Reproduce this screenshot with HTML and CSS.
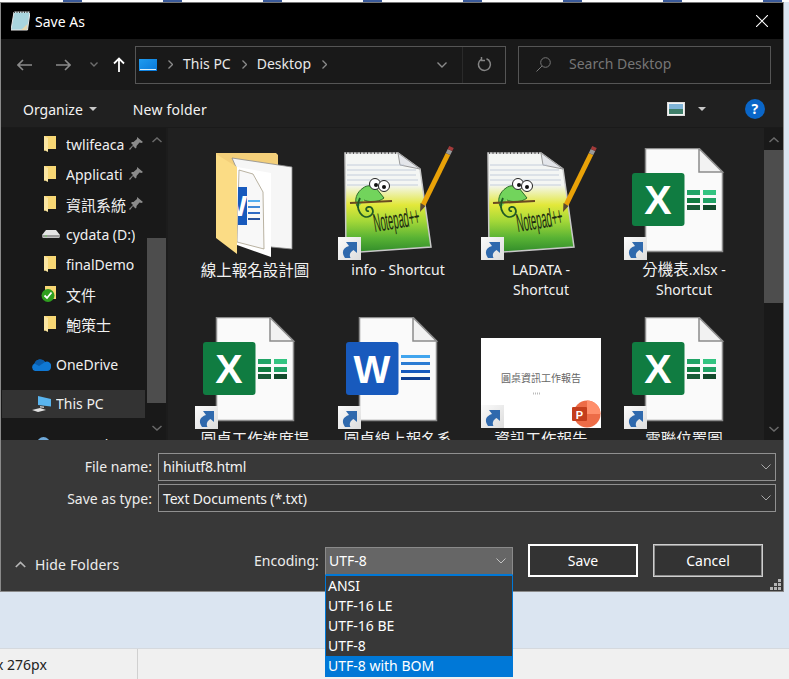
FILE: index.html
```html
<!DOCTYPE html>
<html lang="en">
<head>
  <meta charset="UTF-8" />
  <title>Save As</title>
  <link rel="stylesheet" href="styles.css">
</head>
<body>
  <!-- shared icons -->
  <svg class="defs" width="0" height="0">
    <defs>
      <linearGradient id="pad" x1="0" y1="0" x2="0" y2="1">
        <stop offset="0.32" stop-color="#f4f6f4"/>
        <stop offset="0.52" stop-color="#e2e83a"/>
        <stop offset="0.68" stop-color="#a4d838"/>
        <stop offset="0.85" stop-color="#58b234"/>
        <stop offset="1" stop-color="#2f8a2a"/>
      </linearGradient>
      <linearGradient id="link" x1="0" y1="0" x2="1" y2="1">
        <stop offset="0" stop-color="#fbfbfb"/>
        <stop offset="1" stop-color="#dcdcdc"/>
      </linearGradient>
      <linearGradient id="screen" x1="0" y1="0" x2="1" y2="1">
        <stop offset="0" stop-color="#1e9bf0"/>
        <stop offset="1" stop-color="#0a78d8"/>
      </linearGradient>
      <clipPath id="flap-page"><rect x="43" y="39" width="9" height="38"/></clipPath>
      <symbol id="shortcut" viewBox="0 0 23 23">
        <rect width="23" height="23" fill="url(#link)"/>
        <path d="M7 21C3 15 5 11 11 9L8 5H19V16L15.500 13C12 15 11 18 12.500 21Z" fill="#2f69ad"/>
      </symbol>
      <symbol id="doc" viewBox="0 0 120 112">
        <path d="M21.500 .5H75L98.500 24V103.500H21.500Z" fill="#fafafa" stroke="#8c8c8c" stroke-width="1.500"/>
        <path d="M75 .5V24H98.500Z" fill="#f2f2f2" stroke="#8c8c8c" stroke-width="1.500"/>
      </symbol>
      <symbol id="excel" viewBox="0 0 120 112">
        <use href="#doc" width="120" height="112"/>
        <rect x="63" y="42" width="13" height="5" fill="#21a366"/>
        <rect x="79" y="42" width="13" height="5" fill="#33c481"/>
        <rect x="63" y="50" width="13" height="5" fill="#107c41"/>
        <rect x="79" y="50" width="13" height="5" fill="#21a366"/>
        <rect x="63" y="57" width="13" height="5" fill="#185c37"/>
        <rect x="79" y="57" width="13" height="5" fill="#134a2c"/>
        <rect x="8" y="25" width="52.500" height="53" rx="3" fill="#107c41"/>
        <text x="34" y="66" class="doc-letter" font-size="41">X</text>
        <use href="#shortcut" y="89" width="23" height="23"/>
      </symbol>
      <symbol id="word" viewBox="0 0 120 112">
        <use href="#doc" width="120" height="112"/>
        <rect x="63" y="38" width="29" height="3" fill="#41a5ee"/>
        <rect x="63" y="45" width="29" height="3" fill="#2b7cd3"/>
        <rect x="63" y="53" width="29" height="3" fill="#185abd"/>
        <rect x="63" y="60" width="29" height="3" fill="#103f91"/>
        <rect x="8" y="25" width="52.500" height="53" rx="3" fill="#185abd"/>
        <text x="34" y="66" class="doc-letter" font-size="39">W</text>
        <use href="#shortcut" y="89" width="23" height="23"/>
      </symbol>
      <symbol id="notepad" viewBox="0 -6 120 118" overflow="visible">
        <path d="M7 5H60L82 21L93 99L8 105Z" fill="url(#pad)" stroke="#c8c8c8" stroke-width="1.500"/>
        <path d="M8 5H60" stroke="#333" stroke-width="1.500" stroke-dasharray="1 2.500"/>
        <path d="M60 5L62 17L82 21Z" fill="#e4e6ea" stroke="#9a9a9a"/>
        <path d="M9 17H66M9 22H78M9 27H78M9 32H80M9 37H80" stroke="#b9c4d6" stroke-width=".8"/>
        <path d="M20 60C15 52 19 44 25 40C29 37 34 37 38 40L46 50C40 55 30 54 26 52" fill="#72d45c" stroke="#2d6b2a"/>
        <circle cx="37" cy="36" r="5.500" fill="#fff" stroke="#222"/>
        <circle cx="46" cy="38" r="5.500" fill="#fff" stroke="#222"/>
        <circle cx="38" cy="37" r="2" fill="#111"/>
        <circle cx="46" cy="39" r="2" fill="#111"/>
        <path d="M12 55L54 53" stroke="#6b4a20" stroke-width="2.200"/>
        <path d="M22 50C16 62 25 72 32 68C37 65 35 58 30 59C27 60 28 64 31 63" fill="none" stroke="#1f5a25" stroke-width="1.800"/>
        <text transform="translate(37 84) rotate(-9) scale(.72 2)" class="pad-name" font-size="13">Notepad++</text>
        <path d="M85 57L110 6" stroke="#e9a208" stroke-width="5"/>
        <path d="M110 6L112 2" stroke="#9a9a9a" stroke-width="5"/>
        <path d="M112 2L113.500 -1" stroke="#a33a3a" stroke-width="5"/>
        <path d="M82.500 55L87.500 58L82 64Z" fill="#5a4a30"/>
        <use href="#shortcut" y="89" width="23" height="23"/>
      </symbol>
      <symbol id="folder-sm" viewBox="0 0 12 16">
        <path d="M0 0H12V13H3L0 15Z" fill="#f7d774"/>
        <path d="M0 0L4 2V16L0 14Z" fill="#fbe6a2"/>
      </symbol>
      <symbol id="pin" viewBox="0 0 14 13">
        <path d="M8 0L14 5L12.500 6L10.500 5.500L7.500 9L7.500 10.500L6.500 11.500L4 9L1 13L0 12L4 8L2 6L3 5L4.500 5L8 2Z" fill="#8b8b8b"/>
      </symbol>
    </defs>
  </svg>

  <div class="ruler"></div>

  <div class="window">
    <div class="titlebar">
      <svg class="title-icon" viewBox="0 0 19 20">
        <path d="M3 1H19L16.500 19H0Z" fill="#a9d5de" stroke="#e8e8e8"/>
        <path d="M3 1H19" stroke="#444" stroke-width="2" stroke-dasharray="1 1.500"/>
        <path d="M16.500 13L15.500 19H10Z" fill="#e6d8b0"/>
      </svg>
      <span class="title-text">Save As</span>
      <svg class="close-icon" viewBox="0 0 12 12"><path d="M0 0L12 12M12 0L0 12" stroke="#fff" stroke-width="1.100"/></svg>
    </div>

    <div class="navbar">
      <svg class="nav-btn back" viewBox="0 0 15 12"><path d="M15 6H1M6 1L1 6L6 11" fill="none" stroke="#8a8a8a" stroke-width="1.600"/></svg>
      <svg class="nav-btn forward" viewBox="0 0 15 12"><path d="M0 6H14M9 1L14 6L9 11" fill="none" stroke="#8a8a8a" stroke-width="1.600"/></svg>
      <svg class="nav-btn recent" viewBox="0 0 8 5"><path d="M.5 .5L4 4L7.500 .5" fill="none" stroke="#6e6e6e" stroke-width="1.400"/></svg>
      <svg class="nav-btn up" viewBox="0 0 12 15"><path d="M6 15V1.500M1 6.500L6 1.500L11 6.500" fill="none" stroke="#fff" stroke-width="1.800"/></svg>

      <div class="address">
        <svg class="pc-icon" viewBox="0 0 18 12">
          <rect width="18" height="12" fill="url(#screen)"/>
          <path d="M1 10.500H17" stroke="#d8eefc"/>
        </svg>
        <svg class="crumb" viewBox="0 0 5 9"><path d="M.5 .5L4.500 4.500L.5 8.500" fill="none" stroke="#8a8a8a" stroke-width="1.300"/></svg>
        <span class="crumb-text">This PC</span>
        <svg class="crumb" viewBox="0 0 5 9"><path d="M.5 .5L4.500 4.500L.5 8.500" fill="none" stroke="#8a8a8a" stroke-width="1.300"/></svg>
        <span class="crumb-text">Desktop</span>
        <svg class="crumb" viewBox="0 0 5 9"><path d="M.5 .5L4.500 4.500L.5 8.500" fill="none" stroke="#8a8a8a" stroke-width="1.300"/></svg>
        <svg class="addr-down" viewBox="0 0 10 6"><path d="M.5 .5L5 5L9.500 .5" fill="none" stroke="#8a8a8a" stroke-width="1.400"/></svg>
        <div class="refresh">
          <svg viewBox="0 0 15 15"><path d="M9.500 1.800A6 6 0 1 1 4 2.500M4.500 0V3.500H8" fill="none" stroke="#858585" stroke-width="1.500"/></svg>
        </div>
      </div>

      <div class="search">
        <svg class="search-icon" viewBox="0 0 15 15"><circle cx="9.500" cy="5.500" r="4.800" fill="none" stroke="#777"/><path d="M6 9L.5 14.500" stroke="#777"/></svg>
        <span class="search-text">Search Desktop</span>
      </div>
    </div>

    <div class="toolbar">
      <span class="tool">Organize</span>
      <span class="caret"></span>
      <span class="tool new-folder">New folder</span>
      <svg class="view-icon" viewBox="0 0 18 14">
        <rect x=".5" y=".5" width="17" height="13" fill="#f4f4f4" stroke="#ddd"/>
        <rect x="2" y="2" width="14" height="5" fill="#7fb4d8"/>
        <rect x="2" y="7" width="14" height="5" fill="#3f7f6a"/>
      </svg>
      <span class="caret view-caret"></span>
      <span class="help">?</span>
    </div>

    <div class="browser">
      <div class="sidebar">
        <ul class="tree">
          <li class="tree-row"><svg class="tree-icon"><use href="#folder-sm"/></svg><span class="tree-name">twlifeaca</span><svg class="pin"><use href="#pin"/></svg></li>
          <li class="tree-row"><svg class="tree-icon"><use href="#folder-sm"/></svg><span class="tree-name">Applicati</span><svg class="pin"><use href="#pin"/></svg></li>
          <li class="tree-row"><svg class="tree-icon"><use href="#folder-sm"/></svg><span class="tree-name cjk-tree">資訊系統</span><svg class="pin"><use href="#pin"/></svg></li>
          <li class="tree-row">
            <svg class="tree-icon drive" viewBox="0 0 18 10">
              <path d="M0 6L4 1H14L18 6L17 9H1Z" fill="#e4e4e4"/>
              <path d="M0 6H18V8.500H0Z" fill="#9b9b9b"/>
              <rect x="3" y="6.500" width="2" height="1" fill="#6fd05a"/>
            </svg>
            <span class="tree-name">cydata (D:)</span>
          </li>
          <li class="tree-row"><svg class="tree-icon"><use href="#folder-sm"/></svg><span class="tree-name">finalDemo</span></li>
          <li class="tree-row">
            <svg class="tree-icon synced" viewBox="0 0 16 16">
              <path d="M4 0H15V13H4Z" fill="#f7d774"/>
              <circle cx="7" cy="9.500" r="6.500" fill="#2f9e1f"/>
              <path d="M3.500 9.500L6 12L10.500 6.500" fill="none" stroke="#fff" stroke-width="1.800"/>
            </svg>
            <span class="tree-name cjk-tree">文件</span>
          </li>
          <li class="tree-row"><svg class="tree-icon"><use href="#folder-sm"/></svg><span class="tree-name cjk-tree">鮑策士</span></li>
          <li class="tree-row root onedrive">
            <svg class="root-icon" viewBox="0 0 20 13">
              <path d="M4 13A4 4 0 0 1 3.500 5.500A6 6 0 0 1 14 4A4.500 4.500 0 0 1 20 9.500A4 4 0 0 1 16 13Z" fill="#0f78d4"/>
              <path d="M3.500 5.500A6 6 0 0 1 14 4L8 8Z" fill="#0a5cab"/>
            </svg>
            <span class="tree-name">OneDrive</span>
          </li>
          <li class="tree-row root selected">
            <svg class="root-icon" viewBox="0 0 19 16">
              <path d="M6 0L19 3V10.500L6 9Z" fill="#59b4ee"/>
              <path d="M8 10L12 10.500V12L8 11.500Z" fill="#bdbdbd"/>
              <path d="M0 14L8 12L14 14L6 16Z" fill="#e0e0e0"/>
            </svg>
            <span class="tree-name">This PC</span>
          </li>
          <li class="tree-row root network">
            <svg class="root-icon globe" viewBox="0 0 13 13"><circle cx="6.500" cy="6.500" r="6.500" fill="#6ea8d8"/></svg>
            <span class="tree-name">Network</span>
          </li>
        </ul>
        <div class="scrollbar side-scroll">
          <svg class="arrow" viewBox="0 0 10 6"><path d="M.5 5L5 1L9.500 5" fill="none" stroke="#6a6a6a" stroke-width="1.500"/></svg>
          <div class="thumb"></div>
          <svg class="arrow" viewBox="0 0 10 6"><path d="M.5 1L5 5L9.500 1" fill="none" stroke="#6a6a6a" stroke-width="1.500"/></svg>
        </div>
      </div>

      <div class="files">
        <div class="file-grid">
          <div class="file">
            <svg class="file-icon" viewBox="0 0 120 112">
              <path d="M21 5H81L83 7V60H21Z" fill="#f3cf7a"/>
              <path d="M37 10L97 19V101L76 99Z" fill="#f6f6f6" stroke="#8a8a8a" stroke-width=".8"/>
              <path d="M42 19L76 25V109L42 97Z" fill="#fff"/>
              <path d="M44 22L58 26L68 44L69 101L42 94Z" fill="#f8f8f8" stroke="#a8a08a" stroke-width=".8"/>
              <rect x="43" y="39" width="9" height="38" fill="#185abd"/>
              <text x="38" y="68" class="doc-letter" font-size="30" clip-path="url(#flap-page)">W</text>
              <path d="M53 53H65" stroke="#41a5ee" stroke-width="1.800"/>
              <path d="M53 59H65" stroke="#2b7cd3" stroke-width="1.800"/>
              <path d="M53 65H65" stroke="#185abd" stroke-width="1.800"/>
              <path d="M53 71H65" stroke="#103f91" stroke-width="1.800"/>
              <path d="M21 6L42 19V106L21 90Z" fill="#fbdc85"/>
            </svg>
            <div class="file-name cjk">線上報名設計圖</div>
          </div>
          <div class="file">
            <svg class="file-icon"><use href="#notepad" y="-6" width="120" height="118"/></svg>
            <div class="file-name">info - Shortcut</div>
          </div>
          <div class="file">
            <svg class="file-icon"><use href="#notepad" y="-6" width="120" height="118"/></svg>
            <div class="file-name">LADATA - Shortcut</div>
          </div>
          <div class="file">
            <svg class="file-icon"><use href="#excel"/></svg>
            <div class="file-name"><span class="cjk-inline">分機表</span>.xlsx - Shortcut</div>
          </div>
          <div class="file">
            <svg class="file-icon"><use href="#excel"/></svg>
            <div class="file-name cjk">圓桌工作進度提</div>
          </div>
          <div class="file">
            <svg class="file-icon"><use href="#word"/></svg>
            <div class="file-name cjk">圓桌線上報名系</div>
          </div>
          <div class="file">
            <svg class="file-icon" viewBox="0 0 120 112">
              <rect y="21" width="120" height="90" fill="#fff"/>
              <text x="60" y="65" class="slide-title" font-size="10">圓桌資訊工作報告</text>
              <path d="M52 76.500H60" stroke="#bbb" stroke-width="2" stroke-dasharray="1 1"/>
              <circle cx="106" cy="97" r="13.500" fill="#ed6c47"/>
              <path d="M106 83.500A13.500 13.500 0 0 1 119.500 97H106Z" fill="#ff8f6b"/>
              <rect x="91" y="90" width="15" height="14" rx="1" fill="#c43e1c"/>
              <text x="98.500" y="101.500" class="ppt-letter" font-size="11">P</text>
              <use href="#shortcut" y="88" width="23" height="23"/>
            </svg>
            <div class="file-name cjk">資訊工作報告</div>
          </div>
          <div class="file">
            <svg class="file-icon"><use href="#excel"/></svg>
            <div class="file-name cjk">電聯位置圖</div>
          </div>
        </div>
        <div class="scrollbar main-scroll">
          <svg class="arrow" viewBox="0 0 10 6"><path d="M.5 5L5 1L9.500 5" fill="none" stroke="#6a6a6a" stroke-width="1.500"/></svg>
          <div class="thumb"></div>
          <svg class="arrow" viewBox="0 0 10 6"><path d="M.5 1L5 5L9.500 1" fill="none" stroke="#6a6a6a" stroke-width="1.500"/></svg>
        </div>
      </div>
    </div>

    <div class="save-panel">
      <div class="field">
        <label class="field-label name-label">File name:</label>
        <div class="combo name-box">
          <span>hihiutf8.html</span>
          <svg class="combo-arrow" viewBox="0 0 10 6"><path d="M.5 .5L5 5L9.500 .5" fill="none" stroke="#a8a8a8"/></svg>
        </div>
      </div>
      <div class="field">
        <label class="field-label">Save as type:</label>
        <div class="combo type-box">
          <span>Text Documents (*.txt)</span>
          <svg class="combo-arrow" viewBox="0 0 10 6"><path d="M.5 .5L5 5L9.500 .5" fill="none" stroke="#a8a8a8"/></svg>
        </div>
      </div>
      <div class="actions">
        <div class="hide-folders">
          <svg viewBox="0 0 11 7"><path d="M.8 6L5.500 1.500L10.200 6" fill="none" stroke="#b5b5b5" stroke-width="1.700"/></svg>
          <span>Hide Folders</span>
        </div>
        <span class="encoding-label">Encoding:</span>
        <div class="encoding">
          <div class="encoding-value">
            <span>UTF-8</span>
            <svg class="combo-arrow" viewBox="0 0 10 6"><path d="M.5 .5L5 5L9.500 .5" fill="none" stroke="#c4c4c4"/></svg>
          </div>
          <ul class="encoding-menu">
            <li>ANSI</li>
            <li>UTF-16 LE</li>
            <li>UTF-16 BE</li>
            <li>UTF-8</li>
            <li class="active">UTF-8 with BOM</li>
          </ul>
        </div>
        <button class="btn btn-save">Save</button>
        <button class="btn btn-cancel">Cancel</button>
      </div>
      <svg class="grip" viewBox="0 0 11 11">
        <path d="M8 0h3v3H8zM4 4h3v3H4zM8 4h3v3H8zM0 8h3v3H0zM4 8h3v3H4zM8 8h3v3H8z" fill="#b4b4b4"/>
      </svg>
    </div>
  </div>

  <div class="statusbar">
    <span class="status-size">x 276px</span>
  </div>
</body>
</html>
```

FILE: styles.css
```css
* {
  box-sizing: border-box;
}

body {
  margin: 0;
  width: 789px;
  height: 679px;
  overflow: hidden;
  background: #dbe5f1;
  font-family: "Noto Sans", "Noto Sans CJK TC", sans-serif;
  font-size: 14px;
  color: #fff;
}

ul {
  list-style: none;
  margin: 0;
  padding: 0;
}

.defs {
  position: absolute;
}

.ruler {
  height: 2px;
  background: repeating-linear-gradient(90deg, #fff 0, #fff 63px, #3a5a9a 63px, #3a5a9a 82px, #fff 82px, #fff 100px);
}

.window {
  width: 784px;
  height: 590px;
  border: 1px solid #8a8a8a;
  border-top-color: #777;
  background: #383838;
  display: flex;
  flex-direction: column;
  position: relative;
}

/* title */
.titlebar {
  height: 36px;
  flex: none;
  background: #000;
  display: flex;
  align-items: center;
  padding: 0 15px 0 10px;
}

.title-icon {
  width: 19px;
  height: 20px;
  margin-right: 5px;
}

.title-text {
  flex: 1;
  font-size: 14px;
}

.close-icon {
  width: 12px;
  height: 12px;
}

/* nav */
.navbar {
  height: 51px;
  flex: none;
  background: #191919;
  display: flex;
  align-items: center;
  padding: 0 12px 0 16px;
}

.nav-btn {
  flex: none;
}

.back {
  width: 15px;
  height: 12px;
  margin-right: 24px;
}

.forward {
  width: 15px;
  height: 12px;
  margin-right: 19px;
}

.recent {
  width: 8px;
  height: 5px;
  margin-right: 15px;
}

.up {
  width: 12px;
  height: 15px;
  margin-right: 10px;
}

.address {
  width: 371px;
  height: 38px;
  flex: none;
  border: 1px solid #555;
  display: flex;
  align-items: center;
  padding-left: 3px;
}

.pc-icon {
  width: 18px;
  height: 12px;
  flex: none;
}

.crumb {
  width: 5px;
  height: 9px;
  flex: none;
  margin: 0 10px 0 11px;
}

.crumb-text {
  color: #e8e8e8;
  white-space: nowrap;
  padding-bottom: 2px;
}

.addr-down {
  width: 10px;
  height: 6px;
  flex: none;
  margin-left: 100px;
}

.refresh {
  width: 43px;
  height: 36px;
  flex: none;
  margin-left: auto;
  border-left: 1px solid #2a2a2a;
  display: flex;
  align-items: center;
  justify-content: center;
}

.refresh svg {
  width: 15px;
  height: 15px;
}

.search {
  width: 253px;
  height: 38px;
  flex: none;
  margin-left: 12px;
  border: 1px solid #555;
  display: flex;
  align-items: center;
  padding-left: 17px;
  color: #767676;
}

.search-text {
  padding-bottom: 2px;
}

.search-icon {
  width: 15px;
  height: 15px;
  margin-right: 18px;
}

/* toolbar */
.toolbar {
  height: 38px;
  flex: none;
  background: #202020;
  display: flex;
  align-items: center;
  padding-left: 22px;
  border-bottom: 1px solid #1a1a1a;
}

.tool {
  color: #f2f2f2;
  padding-top: 2px;
}

.caret {
  width: 0;
  height: 0;
  margin-left: 6px;
  border-left: 4px solid transparent;
  border-right: 4px solid transparent;
  border-top: 4px solid #c8c8c8;
}

.new-folder {
  margin-left: 36px;
  letter-spacing: .2px;
}

.view-icon {
  width: 18px;
  height: 14px;
  margin-left: 460px;
}

.view-caret {
  margin-left: 13px;
}

.help {
  width: 20px;
  height: 20px;
  margin-left: 39px;
  border-radius: 50%;
  background: #0a66c8;
  font-weight: 700;
  font-size: 14px;
  line-height: 20px;
  text-align: center;
}

/* browser */
.browser {
  height: 312px;
  flex: none;
  display: flex;
  background: #202020;
  overflow: hidden;
}

.sidebar {
  width: 167px;
  flex: none;
  display: flex;
  background: #191919;
  border-right: 2px solid #1c1c1c;
}

.tree {
  width: 144px;
  padding: 2px 0 0 1px;
  flex: none;
}

.tree-row {
  height: 30px;
  display: flex;
  align-items: center;
  position: relative;
  padding-left: 64px;
  color: #f0f0f0;
  white-space: nowrap;
}

.tree-icon {
  position: absolute;
  left: 42px;
  top: 6px;
  width: 12px;
  height: 16px;
}

.tree-icon.drive {
  left: 40px;
  top: 9px;
  width: 18px;
  height: 10px;
}

.tree-icon.synced {
  left: 39px;
  top: 6px;
  width: 16px;
}

.tree-name {
  overflow: hidden;
  padding-bottom: 2px;
}

.cjk-tree {
  font-size: 15px;
  width: 61px;
}

.pin {
  position: absolute;
  left: 127px;
  top: 7px;
  width: 14px;
  height: 13px;
}

.root {
  padding-left: 54px;
}

.root-icon {
  position: absolute;
  left: 29px;
  top: 8px;
  width: 20px;
  height: 13px;
}

.onedrive {
  margin-top: 10px;
}

.selected {
  height: 28px;
  margin-top: 10px;
  background: #333;
}

.selected .root-icon {
  left: 30px;
  top: 6px;
  width: 19px;
  height: 16px;
}

.network {
  margin-top: 12px;
}

.globe {
  left: 35px;
  top: 7px;
  width: 13px;
}

.scrollbar {
  width: 19px;
  flex: none;
  display: flex;
  flex-direction: column;
  align-items: center;
}

.arrow {
  width: 10px;
  height: 6px;
  flex: none;
}

.side-scroll {
  margin-left: 2px;
  padding-top: 9px;
  height: 305px;
}

.side-scroll .thumb {
  height: 165px;
  margin: 95px 0 22px;
}

.thumb {
  width: 100%;
  flex: none;
  background: #4d4d4d;
}

.files {
  flex: 1;
  display: flex;
  min-width: 0;
}

.file-grid {
  flex: 1;
  padding: 20px 0 0 15px;
  display: grid;
  grid-template-columns: repeat(4, 143px);
  grid-auto-rows: 152px;
  row-gap: 17px;
}

.file {
  padding: 0 11px 0 12px;
  display: flex;
  flex-direction: column;
  align-items: center;
}

.file-icon {
  width: 120px;
  height: 112px;
  flex: none;
  overflow: visible;
}

.file-name {
  max-width: 112px;
  line-height: 20px;
  text-align: center;
  color: #f2f2f2;
}

.cjk {
  font-size: 15.500px;
}

.cjk-inline {
  font-size: 15.500px;
  line-height: 1;
}

.doc-letter {
  font-family: "Liberation Sans", sans-serif;
  font-weight: 700;
  fill: #fff;
  text-anchor: middle;
}

.pad-name {
  font-family: "Liberation Sans", sans-serif;
  fill: #1c2a10;
}

.slide-title {
  font-family: "Noto Sans CJK TC", sans-serif;
  fill: #666;
  text-anchor: middle;
}

.ppt-letter {
  font-family: "Liberation Sans", sans-serif;
  font-weight: 700;
  fill: #fff;
  text-anchor: middle;
}

.main-scroll {
  background: #191919;
  padding-top: 9px;
  height: 312px;
}

.main-scroll .thumb {
  height: 153px;
  margin: 7px 0 123px;
}

/* save panel */
.save-panel {
  flex: 1;
  position: relative;
  padding-top: 13px;
  background: #383838;
}

.field {
  display: flex;
  align-items: center;
  height: 28px;
  margin-bottom: 3px;
}

.field-label {
  width: 151px;
  text-align: right;
  color: #ececec;
  flex: none;
}

.name-label,
.name-box span {
  padding-bottom: 2px;
}

.combo {
  width: 618px;
  height: 28px;
  margin-left: 6px;
  border: 1px solid #909090;
  display: flex;
  align-items: center;
  justify-content: space-between;
  padding: 0 3px 0 4px;
  color: #f2f2f2;
  letter-spacing: -.15px;
}

.type-box {
  background: #333;
}

.combo-arrow {
  width: 10px;
  height: 6px;
  margin-right: 1px;
}

.actions {
  display: flex;
  align-items: center;
  height: 33px;
  margin-top: 32px;
}

.hide-folders {
  display: flex;
  align-items: center;
  width: 253px;
  padding: 8px 0 0 14px;
  color: #ececec;
  letter-spacing: .15px;
}

.hide-folders svg {
  width: 11px;
  height: 7px;
  margin-right: 9px;
}

.encoding-label {
  width: 71px;
  color: #ececec;
}

.encoding {
  width: 188px;
  height: 28px;
  position: relative;
}

.encoding-value {
  height: 28px;
  background: #666;
  border: 1px solid #8a8a8a;
  border-bottom-color: #0078d7;
  display: flex;
  align-items: center;
  justify-content: space-between;
  padding: 0 5px 0 3px;
}

.encoding-menu {
  position: absolute;
  top: 100%;
  left: 0;
  width: 188px;
  height: 102px;
  background: #383838;
  border: 1px solid #0078d7;
  border-top-width: 1px;
  z-index: 2;
}

.encoding-menu li {
  height: 20px;
  line-height: 20px;
  padding-left: 2px;
}

.encoding-menu .active {
  height: 21px;
  margin: 0 -1px;
  padding-left: 3px;
  background: #0078d7;
}

.btn {
  width: 110px;
  height: 33px;
  background: #333;
  font: inherit;
  color: #fff;
  padding: 0;
}

.btn-save {
  margin-left: 15px;
  border: 2px solid #fff;
}

.btn-cancel {
  margin-left: 15px;
  border: 2px solid #8f8f8f;
  outline: 1px solid #cfcfcf;
  outline-offset: -1px;
}

.grip {
  position: absolute;
  right: 2px;
  bottom: 1px;
  width: 11px;
  height: 11px;
}

/* page behind the dialog */
.statusbar {
  margin-top: 56px;
  height: 31px;
  background: #f0f0f0;
  border-top: 1px solid #d5d9de;
  position: relative;
  color: #222;
}

.status-size {
  position: absolute;
  left: -4px;
  top: 0;
  width: 142px;
  height: 30px;
  padding-top: 6px;
  border-right: 1px solid #d0d0d0;
}
```
